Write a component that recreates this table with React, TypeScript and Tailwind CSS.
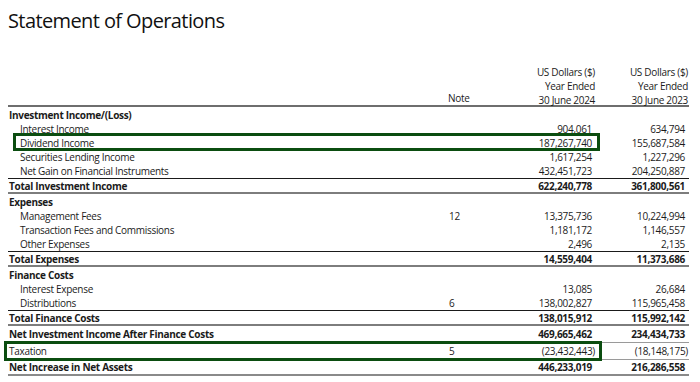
type Row = {
  label: string;
  kind: "heading" | "item" | "total" | "plain";
  note?: string;
  a?: string;
  b?: string;
  box?: "item" | "plain";
  border?: "both" | "light" | "end";
};

const rows: Row[] = [
  { label: "Investment Income/(Loss)", kind: "heading" },
  { label: "Interest Income", kind: "item", a: "904,061", b: "634,794" },
  { label: "Dividend Income", kind: "item", a: "187,267,740", b: "155,687,584", box: "item" },
  { label: "Securities Lending Income", kind: "item", a: "1,617,254", b: "1,227,296" },
  { label: "Net Gain on Financial Instruments", kind: "item", a: "432,451,723", b: "204,250,887" },
  { label: "Total Investment Income", kind: "total", a: "622,240,778", b: "361,800,561", border: "both" },
  { label: "Expenses", kind: "heading" },
  { label: "Management Fees", kind: "item", note: "12", a: "13,375,736", b: "10,224,994" },
  { label: "Transaction Fees and Commissions", kind: "item", a: "1,181,172", b: "1,146,557" },
  { label: "Other Expenses", kind: "item", a: "2,496", b: "2,135" },
  { label: "Total Expenses", kind: "total", a: "14,559,404", b: "11,373,686", border: "both" },
  { label: "Finance Costs", kind: "heading" },
  { label: "Interest Expense", kind: "item", a: "13,085", b: "26,684" },
  { label: "Distributions", kind: "item", note: "6", a: "138,002,827", b: "115,965,458" },
  { label: "Total Finance Costs", kind: "total", a: "138,015,912", b: "115,992,142", border: "both" },
  { label: "Net Investment Income After Finance Costs", kind: "total", a: "469,665,462", b: "234,434,733", border: "light" },
  { label: "Taxation", kind: "plain", note: "5", a: "(23,432,443)", b: "(18,148,175)", box: "plain", border: "light" },
  { label: "Net Increase in Net Assets", kind: "total", a: "446,233,019", b: "216,286,558", border: "end" },
];

const Num = ({ v, bold }: { v?: string; bold?: boolean }) => {
  if (!v) return null;
  const neg = v.startsWith("(");
  return <span className={`${neg ? "" : "pr-[3px]"} ${bold ? "font-bold" : ""}`}>{v}</span>;
};

const StatementRow = ({ row }: { row: Row }) => {
  const bold = row.kind === "heading" || row.kind === "total";
  let rowCls = "h-[14px] leading-[14px]";
  if (row.kind === "heading") rowCls = "h-[15px] leading-[16px]";
  if (row.border === "both") rowCls = "h-[16px] leading-[14px] border-t border-b-2 border-t-[#1a1a1a] border-b-[#7d7d7d]";
  if (row.border === "light") rowCls = "h-[17px] leading-[16px] border-b border-b-[#9a9a9a]";
  if (row.border === "end") rowCls = "h-[16px] leading-[14px] border-b-2 border-b-[#8a8a8a]";

  return (
    <div className={`relative flex ${rowCls}`}>
      <div className={`w-[439px] ${row.kind === "item" ? "pl-[12px]" : "pl-px"} ${bold ? "font-bold" : ""}`}>
        {row.label}
      </div>
      <div className="w-[56px] pl-[2px]">{row.note}</div>
      <div className="w-[94px] text-right pr-[2px]">
        <Num v={row.a} bold={bold} />
      </div>
      <div className="w-[92px] text-right pr-px">
        <Num v={row.b} bold={bold} />
      </div>
      {row.box === "item" && (
        <div className="absolute left-[5px] top-[-3px] w-[587px] h-[18px] border-[3px] border-[#0b4d10]" />
      )}
      {row.box === "plain" && (
        <div className="absolute left-[-4px] top-[-2px] w-[598px] h-[20px] border-[3px] border-[#0b4d10]" />
      )}
    </div>
  );
};

export default function App() {
  return (
    <div
      className="w-[700px] h-[382px] bg-white overflow-hidden text-[#1b1b1b]"
      style={{ fontFamily: '"Open Sans", "Noto Sans", sans-serif' }}
    >
      <h1 className="pl-[8px] pt-[7px] text-[20px] tracking-[-0.6px] leading-[28px] font-normal text-[#111]">
        Statement of Operations
      </h1>

      <div className="ml-[8px] w-[681px] mt-[30px] text-[10px] tracking-[-0.3px]">
        {/* column headings */}
        <div className="flex border-b-2 border-b-[#6e6e6e] leading-[14px]">
          <div className="w-[439px]" />
          <div className="w-[56px] pl-px flex flex-col justify-end h-[40px]">Note</div>
          <div className="w-[94px] text-right pr-[2px] flex flex-col">
            <span className="h-[14px]">US Dollars ($)</span>
            <span className="h-[14px]">Year Ended</span>
            <span className="h-[12px]">30 June 2024</span>
          </div>
          <div className="w-[92px] text-right pr-px flex flex-col">
            <span className="h-[14px]">US Dollars ($)</span>
            <span className="h-[14px]">Year Ended</span>
            <span className="h-[12px]">30 June 2023</span>
          </div>
        </div>

        {rows.map((row) => (
          <StatementRow key={row.label} row={row} />
        ))}
      </div>
    </div>
  );
}
